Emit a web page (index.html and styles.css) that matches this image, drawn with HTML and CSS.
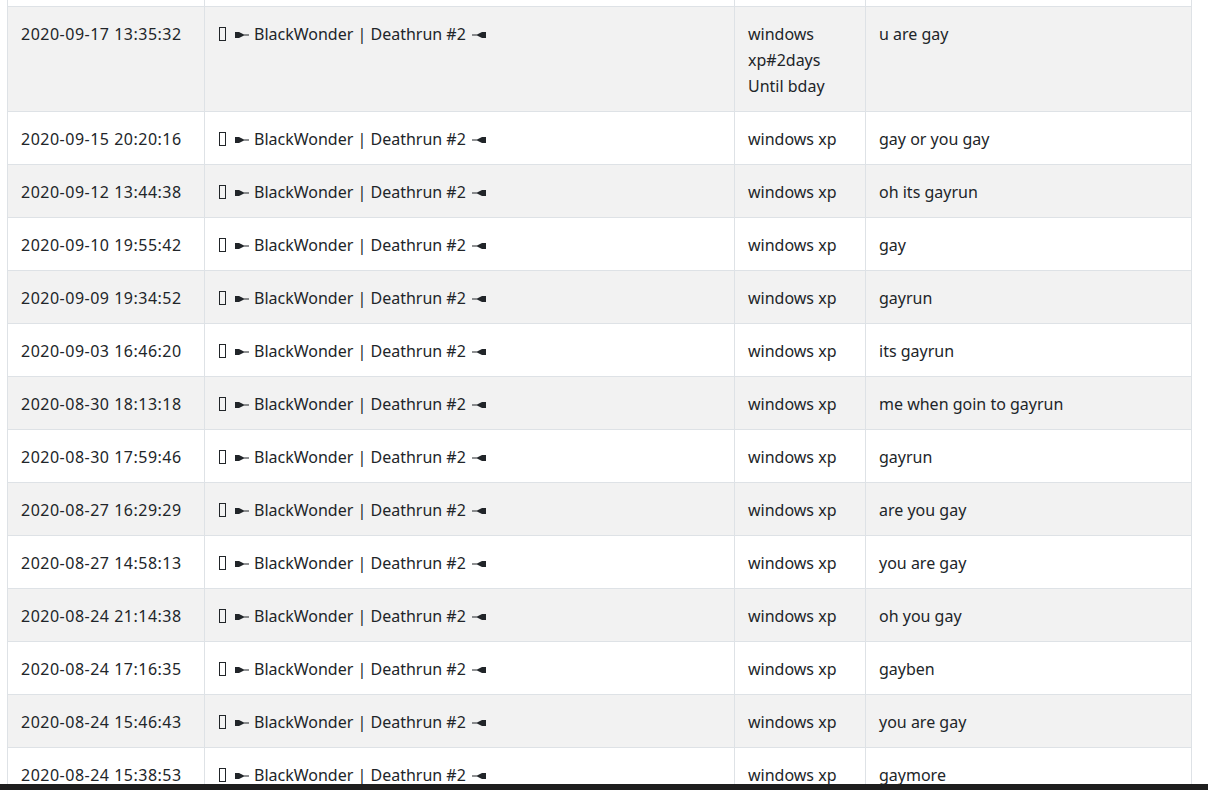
FILE: index.html
```html
<!DOCTYPE html>
<html>
<head>
<meta charset="utf-8">
<link rel="stylesheet" href="styles.css">
</head>
<body>
<div class="wrap">
<table class="log">
<colgroup><col class="c-date"><col class="c-server"><col class="c-name"><col class="c-msg"></colgroup>
<tbody>
<tr class="odd spacer"><td></td><td></td><td></td><td></td></tr>
<tr class="even"><td class="date">2020-09-17 13:35:32</td><td><span class="tofu"></span><svg class="arr l" viewBox="0 0 14 8"><path d="M0 1h4l5 2.5h5v1H9L4 7H0z"/></svg>BlackWonder | Deathrun #2<svg class="arr r" viewBox="0 0 14 8"><path d="M14 1h-4L5 3.5H0v1h5L10 7h4z"/></svg></td><td>windows xp#2days Until bday</td><td>u are gay</td></tr>
<tr class="odd"><td class="date">2020-09-15 20:20:16</td><td><span class="tofu"></span><svg class="arr l" viewBox="0 0 14 8"><path d="M0 1h4l5 2.5h5v1H9L4 7H0z"/></svg>BlackWonder | Deathrun #2<svg class="arr r" viewBox="0 0 14 8"><path d="M14 1h-4L5 3.5H0v1h5L10 7h4z"/></svg></td><td>windows xp</td><td>gay or you gay</td></tr>
<tr class="even"><td class="date">2020-09-12 13:44:38</td><td><span class="tofu"></span><svg class="arr l" viewBox="0 0 14 8"><path d="M0 1h4l5 2.5h5v1H9L4 7H0z"/></svg>BlackWonder | Deathrun #2<svg class="arr r" viewBox="0 0 14 8"><path d="M14 1h-4L5 3.5H0v1h5L10 7h4z"/></svg></td><td>windows xp</td><td>oh its gayrun</td></tr>
<tr class="odd"><td class="date">2020-09-10 19:55:42</td><td><span class="tofu"></span><svg class="arr l" viewBox="0 0 14 8"><path d="M0 1h4l5 2.5h5v1H9L4 7H0z"/></svg>BlackWonder | Deathrun #2<svg class="arr r" viewBox="0 0 14 8"><path d="M14 1h-4L5 3.5H0v1h5L10 7h4z"/></svg></td><td>windows xp</td><td>gay</td></tr>
<tr class="even"><td class="date">2020-09-09 19:34:52</td><td><span class="tofu"></span><svg class="arr l" viewBox="0 0 14 8"><path d="M0 1h4l5 2.5h5v1H9L4 7H0z"/></svg>BlackWonder | Deathrun #2<svg class="arr r" viewBox="0 0 14 8"><path d="M14 1h-4L5 3.5H0v1h5L10 7h4z"/></svg></td><td>windows xp</td><td>gayrun</td></tr>
<tr class="odd"><td class="date">2020-09-03 16:46:20</td><td><span class="tofu"></span><svg class="arr l" viewBox="0 0 14 8"><path d="M0 1h4l5 2.5h5v1H9L4 7H0z"/></svg>BlackWonder | Deathrun #2<svg class="arr r" viewBox="0 0 14 8"><path d="M14 1h-4L5 3.5H0v1h5L10 7h4z"/></svg></td><td>windows xp</td><td>its gayrun</td></tr>
<tr class="even"><td class="date">2020-08-30 18:13:18</td><td><span class="tofu"></span><svg class="arr l" viewBox="0 0 14 8"><path d="M0 1h4l5 2.5h5v1H9L4 7H0z"/></svg>BlackWonder | Deathrun #2<svg class="arr r" viewBox="0 0 14 8"><path d="M14 1h-4L5 3.5H0v1h5L10 7h4z"/></svg></td><td>windows xp</td><td>me when goin to gayrun</td></tr>
<tr class="odd"><td class="date">2020-08-30 17:59:46</td><td><span class="tofu"></span><svg class="arr l" viewBox="0 0 14 8"><path d="M0 1h4l5 2.5h5v1H9L4 7H0z"/></svg>BlackWonder | Deathrun #2<svg class="arr r" viewBox="0 0 14 8"><path d="M14 1h-4L5 3.5H0v1h5L10 7h4z"/></svg></td><td>windows xp</td><td>gayrun</td></tr>
<tr class="even"><td class="date">2020-08-27 16:29:29</td><td><span class="tofu"></span><svg class="arr l" viewBox="0 0 14 8"><path d="M0 1h4l5 2.5h5v1H9L4 7H0z"/></svg>BlackWonder | Deathrun #2<svg class="arr r" viewBox="0 0 14 8"><path d="M14 1h-4L5 3.5H0v1h5L10 7h4z"/></svg></td><td>windows xp</td><td>are you gay</td></tr>
<tr class="odd"><td class="date">2020-08-27 14:58:13</td><td><span class="tofu"></span><svg class="arr l" viewBox="0 0 14 8"><path d="M0 1h4l5 2.5h5v1H9L4 7H0z"/></svg>BlackWonder | Deathrun #2<svg class="arr r" viewBox="0 0 14 8"><path d="M14 1h-4L5 3.5H0v1h5L10 7h4z"/></svg></td><td>windows xp</td><td>you are gay</td></tr>
<tr class="even"><td class="date">2020-08-24 21:14:38</td><td><span class="tofu"></span><svg class="arr l" viewBox="0 0 14 8"><path d="M0 1h4l5 2.5h5v1H9L4 7H0z"/></svg>BlackWonder | Deathrun #2<svg class="arr r" viewBox="0 0 14 8"><path d="M14 1h-4L5 3.5H0v1h5L10 7h4z"/></svg></td><td>windows xp</td><td>oh you gay</td></tr>
<tr class="odd"><td class="date">2020-08-24 17:16:35</td><td><span class="tofu"></span><svg class="arr l" viewBox="0 0 14 8"><path d="M0 1h4l5 2.5h5v1H9L4 7H0z"/></svg>BlackWonder | Deathrun #2<svg class="arr r" viewBox="0 0 14 8"><path d="M14 1h-4L5 3.5H0v1h5L10 7h4z"/></svg></td><td>windows xp</td><td>gayben</td></tr>
<tr class="even"><td class="date">2020-08-24 15:46:43</td><td><span class="tofu"></span><svg class="arr l" viewBox="0 0 14 8"><path d="M0 1h4l5 2.5h5v1H9L4 7H0z"/></svg>BlackWonder | Deathrun #2<svg class="arr r" viewBox="0 0 14 8"><path d="M14 1h-4L5 3.5H0v1h5L10 7h4z"/></svg></td><td>windows xp</td><td>you are gay</td></tr>
<tr class="odd"><td class="date">2020-08-24 15:38:53</td><td><span class="tofu"></span><svg class="arr l" viewBox="0 0 14 8"><path d="M0 1h4l5 2.5h5v1H9L4 7H0z"/></svg>BlackWonder | Deathrun #2<svg class="arr r" viewBox="0 0 14 8"><path d="M14 1h-4L5 3.5H0v1h5L10 7h4z"/></svg></td><td>windows xp</td><td>gaymore</td></tr>
</tbody>
</table>
</div>
<div class="footer-bar"></div>
</body>
</html>
```
FILE: styles.css
```css
html, body {
  margin: 0;
  padding: 0;
  background: #ffffff;
  overflow: hidden;
}
body {
  font-family: "Noto Sans", "Open Sans", "Liberation Sans", sans-serif;
  font-size: 16px;
  color: #212529;
}
.wrap {
  padding-left: 7px;
  width: 1184px;
}
.log {
  margin-top: -47px;
  width: 1184px;
  border-collapse: collapse;
  table-layout: fixed;
}
.c-date { width: 197px; }
.c-server { width: 530px; }
.c-name { width: 131px; }
.c-msg { width: 326px; }
.log td {
  border: 1px solid #dee2e6;
  padding: 14px 13px 12px 13px;
  line-height: 26px;
  vertical-align: top;
  text-align: left;
}
.log tr.spacer td {
  height: 26px;
}
.log td.date {
  letter-spacing: 0.5px;
}
.log tr.even td { background: #f2f2f2; }
.log tr.odd td { background: #ffffff; }
.tofu {
  display: inline-block;
  width: 5px;
  height: 12px;
  border: 1px solid #212529;
  vertical-align: -1px;
  box-sizing: content-box;
  margin-left: 1px;
}
.arr {
  display: inline-block;
  width: 14px;
  height: 8px;
  fill: #212529;
  vertical-align: 1px;
}
.arr.l {
  margin: 0 5px 0 9px;
}
.arr.r {
  margin-left: 6px;
}
.footer-bar {
  position: fixed;
  left: 0;
  right: 0;
  bottom: 0;
  height: 6px;
  background: #1e1e1e;
}
```
